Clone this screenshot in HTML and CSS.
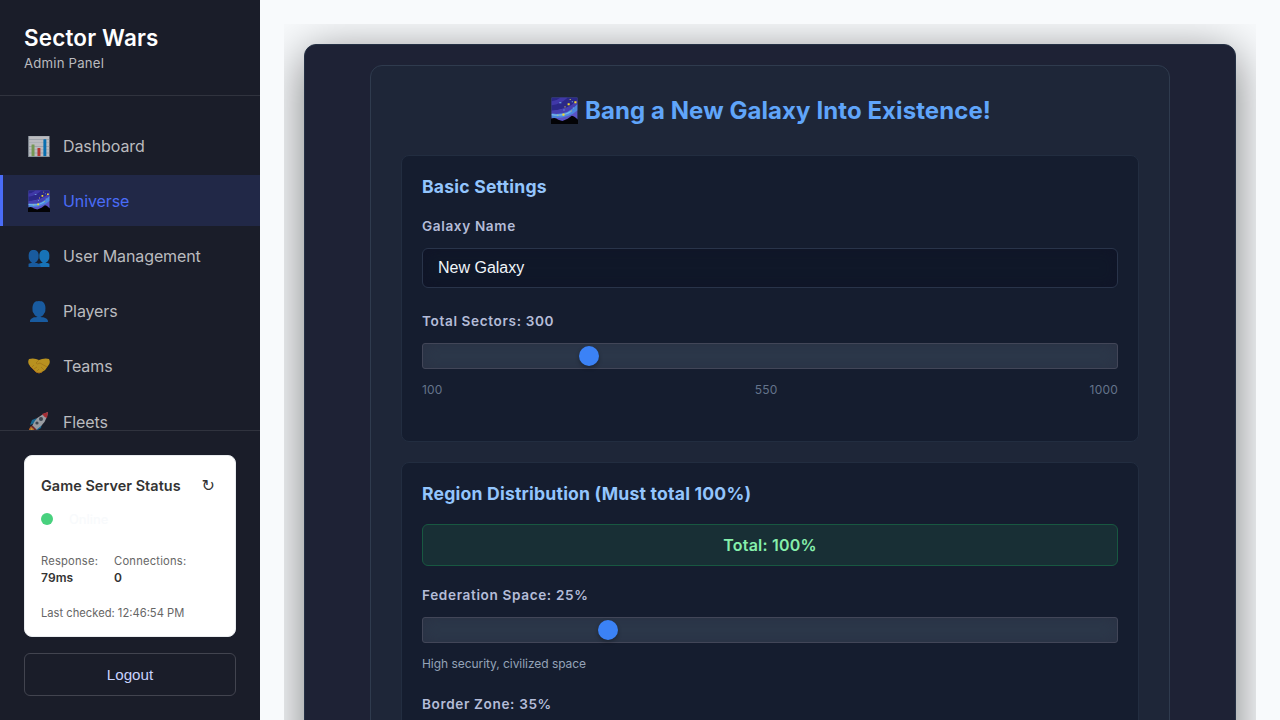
FILE: index.html
```html
<!DOCTYPE html>
<html lang="en">
<head>
<meta charset="utf-8">
<title>Sector Wars Admin</title>
<link rel="stylesheet" href="styles.css">
</head>
<body>
<svg class="defs" width="0" height="0">
  <defs>
    <symbol id="galaxy" viewBox="0 0 26 26">
      <rect width="26" height="26" rx="1" fill="#26324d"/>
      <rect x=".7" y=".7" width="24.6" height="24.6" fill="#5a53c4"/>
      <path d="M.7 .7H25.3V8L.7 14z" fill="#2b2888"/>
      <path d="M.7 8Q9 7 16 .7H9Q5 4 .7 4z" fill="#4038a8"/>
      <path d="M.7 13Q16 13 25.3 3V9Q18 18 .7 16z" fill="#463fb0"/>
      <path d="M.7 16Q16 18 25.3 7V13Q17 21 .7 20z" fill="#4c86dc"/>
      <path d="M.7 17Q12 19 19 14" stroke="#75b9ed" stroke-width="1.2" fill="none"/>
      <path d="M0 26V21Q4 19 7 22L11 23L16 21L20 18Q22 18 26 22V26z" fill="#030306"/>
      <path d="M16 6h2v2h-2zM22.5 4h2v2h-2zM11 16h2v2h-2z" fill="#f4d928"/>
      <path d="M18 2h1v1h-1zM13 9h1v1h-1zM19 13h1v1h-1zM6 17h1v1H6z" fill="#d5c551"/>
      <path d="M20 4h1v1h-1zM12 12h1v1h-1zM21 10h1v1h-1zM8 5h2v1H8z" fill="#78b7e9"/>
    </symbol>
  </defs>
</svg>
<div class="app">
  <aside class="sidebar">
    <header class="brand">
      <h1 class="brand-title">Sector Wars</h1>
      <p class="brand-sub">Admin Panel</p>
    </header>
    <nav class="nav">
      <a class="nav-item"><span class="nav-icon">📊</span><span class="nav-text">Dashboard</span></a>
      <a class="nav-item active"><span class="nav-icon"><svg width="22" height="22"><use href="#galaxy"/></svg></span><span class="nav-text">Universe</span></a>
      <a class="nav-item"><span class="nav-icon">👥</span><span class="nav-text">User Management</span></a>
      <a class="nav-item"><span class="nav-icon">👤</span><span class="nav-text">Players</span></a>
      <a class="nav-item"><span class="nav-icon"><svg width="22" height="22" viewBox="0 0 22 22">
        <path d="M1 4Q5 3 8 4L11 5L14 4Q18 3 21 4Q23 8 20 11Q18 15 14 17Q11 19 8 17L2 11Q-1 8 1 4z" fill="#fcc21b"/>
        <path d="M11 5L8 8Q9 10 12 8L19 12M4 12L6 10M6 14L9 12M9 16L11 14M13 12L16 15" stroke="#d99a13" stroke-width=".8" fill="none"/>
        <path d="M2 11L8 17Q11 19 14 17" stroke="#e48c15" fill="none"/>
      </svg></span><span class="nav-text">Teams</span></a>
      <a class="nav-item"><span class="nav-icon"><svg width="22" height="22" viewBox="0 0 22 22">
        <path d="M9 7L4 9L2 14L7 12zM14 12L13 17L8 20L10 14z" fill="#1687bd"/>
        <path d="M3 15L7 18L4 21L1 22L1 18z" fill="#f47b21"/><path d="M3 17L5 18L2 21z" fill="#ffd13b"/>
        <path d="M4 15Q8 5 20 1Q19 12 8 19z" fill="#cfd2d5"/>
        <path d="M14 3L20 1L19 7Q16 6 14 3z" fill="#e0343a"/>
        <circle cx="13" cy="8" r="2" fill="#4b5660"/><circle cx="9" cy="12" r="1.6" fill="#4b5660"/>
        <path d="M4 15L8 19" stroke="#8b2b35" stroke-width="1.5"/>
      </svg></span><span class="nav-text">Fleets</span></a>
    </nav>
    <footer class="side-footer">
      <section class="status">
        <div class="status-head"><h2 class="status-title">Game Server Status</h2><button class="refresh">↻</button></div>
        <div class="status-line"><span class="dot"></span><span class="status-text">Online</span></div>
        <div class="metrics">
          <div class="metric"><span class="metric-label">Response:</span><span class="metric-value">79ms</span></div>
          <div class="metric"><span class="metric-label">Connections:</span><span class="metric-value">0</span></div>
        </div>
        <div class="checked">Last checked: 12:46:54 PM</div>
      </section>
      <button class="logout">Logout</button>
    </footer>
  </aside>
  <main class="main">
    <div class="viewport">
      <div class="panel">
        <div class="generator">
          <h2 class="gen-title"><svg class="title-icon" width="27" height="27"><use href="#galaxy"/></svg>Bang a New Galaxy Into Existence!</h2>
          <section class="group basic">
            <h3 class="group-title">Basic Settings</h3>
            <label class="label">Galaxy Name</label>
            <input class="text-input" type="text" value="New Galaxy">
            <label class="label sectors">Total Sectors: 300</label>
            <input class="slider" type="range" min="100" max="1000" value="300">
            <div class="ticks"><span>100</span><span>550</span><span>1000</span></div>
          </section>
          <section class="group">
            <h3 class="group-title">Region Distribution (Must total 100%)</h3>
            <div class="total">Total: 100%</div>
            <label class="label federation">Federation Space: 25%</label>
            <input class="slider" type="range" min="0" max="100" value="25">
            <p class="hint">High security, civilized space</p>
            <label class="label border-zone">Border Zone: 35%</label>
            <input class="slider" type="range" min="0" max="100" value="35">
          </section>
        </div>
      </div>
    </div>
  </main>
</div>
</body>
</html>
```
FILE: styles.css
```css
* { box-sizing: border-box; margin: 0; padding: 0; }
body { font-family: Inter, sans-serif; background: #f8fafc; overflow: hidden; }
.defs { display: none; }
.app { display: flex; height: 720px; overflow: hidden; }

.sidebar { width: 260px; flex: none; display: flex; flex-direction: column; background: #1a1d29; color: #fff; }
.brand { height: 96px; flex: none; padding: 24px; border-bottom: 1px solid #30333e; }
.brand-title { font-size: 22.4px; font-weight: 600; line-height: 28px; letter-spacing: .2px; }
.brand-sub { font-size: 13.2px; line-height: 21px; margin-top: 1px; letter-spacing: .2px; color: #babbbf; }
.nav { flex: 1; min-height: 0; overflow: hidden; padding-top: 24px; }
.nav-item { display: flex; align-items: center; height: 51.2px; margin-bottom: 4px; padding-left: 24px; border-left: 3px solid transparent; }
.nav-icon { width: 24px; font-size: 19.2px; line-height: 24px; text-align: center; margin-right: 12px; display: flex; justify-content: center; opacity: .7; }
.nav-text { font-size: 16px; line-height: 24px; letter-spacing: -.1px; color: #babbbf; }
.active { background: rgba(74, 108, 247, .15); border-left-color: #4a6cf7; }
.active .nav-icon { opacity: 1; }
.active .nav-text { color: #4a6cf7; }

.side-footer { height: 290px; flex: none; padding: 24px; border-top: 1px solid #30333e; }
.status { height: 182px; padding: 16px; border: 1px solid #e9ecef; border-radius: 8px; background: #fff; color: #333; }
.status-head { display: flex; justify-content: space-between; align-items: center; height: 28px; }
.status-title { font-size: 14.4px; font-weight: 600; letter-spacing: .06px; line-height: 18px; padding-bottom: 1px; }
.refresh { border: 0; background: none; font: 16px "DejaVu Sans", sans-serif; color: #333; padding: 0 4px 2px 0; }
.status-line { display: flex; align-items: center; height: 20px; margin-top: 9px; }
.dot { width: 12px; height: 12px; border-radius: 50%; background: #48d17e; margin-right: 16px; }
.status-text { font-size: 12.8px; font-weight: 500; color: #f8fafc; }
.metrics { display: flex; gap: 16px; margin-top: 23px; }
.metric { display: flex; flex-direction: column; }
.metric-label { font-size: 11.2px; line-height: 18px; letter-spacing: .2px; color: #666; }
.metric-value { font-size: 12px; line-height: 16px; font-weight: 600; letter-spacing: .1px; }
.checked { font-size: 11.2px; line-height: 18px; margin-top: 18px; color: #666; }
.logout { display: block; width: 100%; height: 43px; margin-top: 16px; border: 1px solid #42444f; border-radius: 6px; background: none; color: #c7d2fe; font: 15.2px "Liberation Sans", sans-serif; }

.main { flex: 1; padding: 24px 24px 0; }
.viewport { height: 696px; overflow: hidden; padding: 20px 20px 0; }
.panel { height: 900px; padding: 20px 65px; border: 1px solid #253145; border-radius: 12px; background: #1e2235; box-shadow: 0 10px 48px rgba(0, 0, 0, .5); }
.generator { height: 860px; padding: 30px; border: 1px solid #2f3b4e; border-radius: 12px; background: #1e2638; }
.gen-title { display: flex; justify-content: center; height: 59px; font-size: 24px; line-height: 30px; font-weight: 700; letter-spacing: .08px; color: #60a5fa; padding-left: 2px; }
.title-icon { margin: 1px 7px 0 0; }
.group { padding: 20px; margin-bottom: 20px; border: 1px solid #222d40; border-radius: 8px; background: #151d2f; }
.basic { height: 287px; }
.group-title { font-size: 17.6px; line-height: 22px; font-weight: 700; letter-spacing: .2px; color: #93c5fd; }
.label { display: block; margin-top: 16px; font-size: 13.6px; line-height: 24px; font-weight: 600; letter-spacing: .63px; color: #b4bcd8; }
.text-input { display: block; width: 100%; height: 40px; margin-top: 10px; padding: 0 15px; border: 1px solid #29344a; border-radius: 6px; background: #101829; box-shadow: inset 0 0 15px rgba(16, 16, 38, .6); color: #f1f5f9; font: 16px "Liberation Sans", sans-serif; }
.sectors { margin-top: 21px; }
.slider { appearance: none; display: block; width: 100%; height: 26px; margin-top: 10px; padding: 0 12px; border: 1px solid #424658; border-radius: 3px; background: #2c384a; box-shadow: inset 0 0 15px rgba(40, 42, 62, .5); }
.slider::-webkit-slider-thumb { appearance: none; width: 20px; height: 20px; border-radius: 50%; background: #3b82f6; box-shadow: 0 2px 4px rgba(0, 0, 0, .3); }
.ticks { display: flex; justify-content: space-between; margin-top: 11px; font-size: 12px; line-height: 20px; letter-spacing: .2px; color: #64748b; }
.total { height: 42px; margin-top: 19px; border: 1px solid #185841; border-radius: 6px; background: #182f35; text-align: center; font-size: 16px; line-height: 41px; font-weight: 600; letter-spacing: .2px; color: #86efac; }
.federation { margin-top: 17px; }
.hint { font-size: 12px; line-height: 20px; margin-top: 11px; letter-spacing: -.05px; color: #94a3b8; }
.border-zone { margin-top: 18px; }
```
